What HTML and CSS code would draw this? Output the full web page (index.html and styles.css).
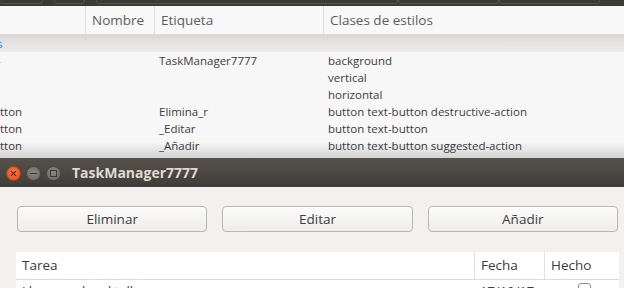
FILE: index.html
```html
<!DOCTYPE html>
<html lang="es">
<head>
  <meta charset="UTF-8" />
  <title>TaskManager7777</title>
  <link rel="stylesheet" href="styles.css">
</head>
<body>
  <!-- Inspector de GTK, detrás de la ventana -->
  <div class="inspector">
    <div class="toolbar">
      <div class="tab tab-a"></div>
      <div class="tab tab-b"></div>
      <div class="tab tab-c"></div>
      <div class="tab tab-d"></div>
      <div class="tab tab-e"></div>
    </div>

    <div class="tree-head">
      <div class="col c0"></div>
      <div class="col c1">Nombre</div>
      <div class="col c2">Etiqueta</div>
      <div class="col c3">Clases de estilos</div>
    </div>

    <div class="rows">
      <div class="row band"><span class="c0 blue cut">s</span></div>
      <div class="row"><span class="c0 blue cut">-</span><span class="c1"></span><span class="c2">TaskManager7777</span><span class="c3">background</span></div>
      <div class="row"><span class="c0"></span><span class="c1"></span><span class="c2"></span><span class="c3">vertical</span></div>
      <div class="row"><span class="c0"></span><span class="c1"></span><span class="c2"></span><span class="c3">horizontal</span></div>
      <div class="row"><span class="c0">tton</span><span class="c1"></span><span class="c2">Elimina_r</span><span class="c3">button text-button destructive-action</span></div>
      <div class="row"><span class="c0">tton</span><span class="c1"></span><span class="c2">_Editar</span><span class="c3">button text-button</span></div>
      <div class="row"><span class="c0">tton</span><span class="c1"></span><span class="c2">_Añadir</span><span class="c3">button text-button suggested-action</span></div>
      <div class="shade"></div>
    </div>
  </div>

  <!-- Ventana de la aplicación -->
  <div class="window">
    <div class="titlebar">
      <div class="wm-buttons">
        <span class="wm wm-close"></span>
        <span class="wm wm-min"></span>
        <span class="wm wm-max"></span>
      </div>
      <div class="title">TaskManager7777</div>
    </div>

    <div class="content">
      <div class="actions">
        <button class="btn">Eliminar</button>
        <button class="btn">Editar</button>
        <button class="btn">Añadir</button>
      </div>

      <div class="tasks">
        <div class="tasks-head">
          <div class="th th-task">Tarea</div>
          <div class="th th-date">Fecha</div>
          <div class="th th-done">Hecho</div>
        </div>
        <div class="task-row">
          <div class="td th-task">Llevar coche al taller</div>
          <div class="td th-date">17/10/17</div>
          <div class="td th-done"><span class="check"></span></div>
        </div>
      </div>
    </div>
  </div>
</body>
</html>
```

FILE: styles.css
```css
body {
  margin: 0;
  width: 624px;
  height: 288px;
  overflow: hidden;
  font-family: 'Open Sans', 'Noto Sans', sans-serif;
  background-color: #f2f1f0;
}

/* ---------- inspector ---------- */

.inspector {
  height: 158px;
  overflow: hidden;
  background-color: #f7f7f7;
  position: relative;
}

.toolbar {
  height: 6px;
  background-color: #3b3a36;
  display: flex;
  overflow: hidden;
}

.tab {
  height: 4px;
  margin-top: -2px;
  border: 1px solid #55534e;
  border-radius: 3px;
  flex: none;
}

.tab-a { width: 42px; margin-left: -1px; }
.tab-b { width: 29px; margin-left: 11px; }
.tab-c { width: 300px; margin-left: 11px; }
.tab-d { width: 99px; margin-left: 0; }
.tab-e { width: 99px; margin-left: 0; }

.tree-head {
  display: flex;
  height: 28px;
  background-color: #f8f8f8;
  border-bottom: 1px solid #dcdcdc;
}

.tree-head .col {
  font-size: 13.5px;
  color: #5d5d5d;
  line-height: 28px;
  padding-left: 6px;
  border-right: 1px solid #dedede;
  box-sizing: border-box;
}

.c0 { width: 86px; flex: none; }
.c1 { width: 69px; flex: none; }
.c2 { width: 169px; flex: none; }
.c3 { flex: 1; }

.tree-head .c0 { padding-left: 0; }
.tree-head .c3 { border-right: none; }

.rows {
  position: relative;
  height: 130px;
}

.row {
  display: flex;
  height: 17px;
  line-height: 17px;
  font-size: 11.5px;
  color: #3c3c3c;
  white-space: nowrap;
}

.row span {
  box-sizing: border-box;
  overflow: hidden;
}

.row .c2 { padding-left: 4px; }
.row .c3 { padding-left: 4px; }

.row.band {
  height: 17px;
  background: linear-gradient(#d8d7d5, #e4e3e1 40%, #ecebea);
}

.blue {
  color: #3f7fc0;
}

.cut {
  text-indent: -3px;
}

.shade {
  position: absolute;
  left: 0;
  right: 0;
  bottom: 0;
  height: 24px;
  background: linear-gradient(rgba(0, 0, 0, 0), rgba(0, 0, 0, 0.2));
}

/* ---------- ventana ---------- */

.window {
  height: 130px;
  background-color: #f2f1f0;
}

.titlebar {
  height: 29px;
  background: linear-gradient(#565249, #3e3d39);
  display: flex;
  align-items: center;
  padding-left: 6px;
}

.wm-buttons {
  display: flex;
  gap: 5px;
  padding-top: 1px;
}

.wm {
  width: 15px;
  height: 15px;
  border-radius: 50%;
  box-sizing: border-box;
  display: flex;
  align-items: center;
  justify-content: center;
  position: relative;
}

.wm-close {
  background: radial-gradient(circle at 50% 40%, #f47a4a, #df4c1d);
  border: 1px solid #b33e12;
}

.wm-close::before,
.wm-close::after {
  content: "";
  position: absolute;
  width: 7px;
  height: 1px;
  background-color: #5a2410;
  transform: rotate(45deg);
}

.wm-close::after {
  transform: rotate(-45deg);
}

.wm-min,
.wm-max {
  background: radial-gradient(circle at 50% 40%, #8a8780, #6a6862);
  border: 1px solid #4a4843;
}

.wm-min::before {
  content: "";
  width: 7px;
  height: 1px;
  background-color: #3a3935;
}

.wm-max::before {
  content: "";
  width: 5px;
  height: 5px;
  border: 1px solid #3a3935;
}

.title {
  margin-left: 11px;
  font-weight: bold;
  font-size: 14px;
  color: #dfdbd2;
}

.content {
  padding: 19px 6px 0 16px;
}

.actions {
  display: flex;
  gap: 15px;
  padding-left: 1px;
}

.btn {
  width: 191px;
  height: 26px;
  border: 1px solid #b9b7b1;
  border-radius: 4px;
  background: linear-gradient(#fcfcfb, #eeedeb);
  font-family: inherit;
  font-size: 13.5px;
  color: #3c3c3c;
  padding: 0;
}

.tasks {
  margin-top: 20px;
  width: 603px;
  background-color: #ffffff;
}

.tasks-head {
  display: flex;
  height: 27px;
  border-bottom: 1px solid #dcdcdc;
}

.th {
  font-size: 13.5px;
  color: #3c3c3c;
  line-height: 27px;
  padding-left: 6px;
  box-sizing: border-box;
}

.th-task { width: 458px; }
.th-date { width: 70px; border-left: 1px solid #e2e2e2; }
.th-done { flex: 1; border-left: 1px solid #e2e2e2; }

.task-row {
  display: flex;
  height: 22px;
}

.td {
  font-size: 13px;
  color: #3c3c3c;
  line-height: 22px;
  padding-left: 6px;
  box-sizing: border-box;
  border-left: none;
}

.td.th-done {
  display: flex;
  justify-content: center;
  padding-top: 3px;
}

.check {
  width: 13px;
  height: 13px;
  border: 1px solid #8f8d88;
  border-radius: 3px;
  background-color: #fff;
  box-sizing: border-box;
}
```
